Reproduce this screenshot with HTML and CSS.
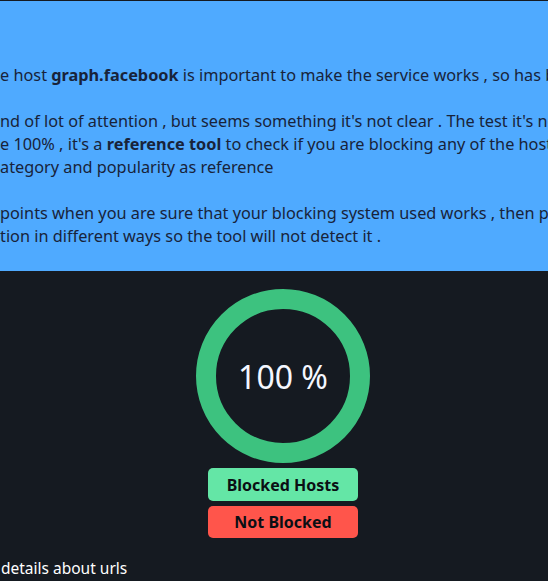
FILE: index.html
```html
<!DOCTYPE html>
<html lang="en">
<head>
  <meta charset="UTF-8">
  <title>Blocking test</title>
  <link rel="stylesheet" href="styles.css">
</head>
<body>
  <div class="intro">
    <p>e host <b>graph.facebook</b> is important to make the service works , so has been whitelisted</p>
    <p>nd of lot of attention , but seems something it's not clear . The test it's not<br>
    e 100% , it's a <b>reference tool</b> to check if you are blocking any of the hosts<br>
    ategory and popularity as reference</p>
    <p>points when you are sure that your blocking system used works , then probably<br>
    tion in different ways so the tool will not detect it .</p>
  </div>

  <div class="result">
    <div class="score">
      <div class="ring">100 %</div>
      <button class="tag blocked">Blocked Hosts</button>
      <button class="tag not-blocked">Not Blocked</button>
    </div>
    <p class="details">details about urls</p>
  </div>
</body>
</html>
```

FILE: styles.css
```css
html, body {
  margin: 0;
  overflow: hidden;
}
body {
  font-family: 'Noto Sans', sans-serif;
  font-size: 16px;
  line-height: 23px;
  background-color: #151a21;
  border-top: 1px solid #151a21;
}
.intro {
  background-color: #4faaff;
  color: #18233a;
  font-size: 16.3px;
  padding: 63px 0 23px 0;
  white-space: nowrap;
}
.intro p {
  margin: 0 0 23px 0;
}
.intro p:last-child {
  margin-bottom: 0;
}
.result {
  color: white;
}
.score {
  width: 566px;
  display: flex;
  flex-direction: column;
  align-items: center;
  padding-top: 18px;
}
.ring {
  width: 174px;
  height: 174px;
  box-sizing: border-box;
  border: 20px solid #3dc27f;
  border-radius: 50%;
  display: flex;
  align-items: center;
  justify-content: center;
  font-size: 32px;
  color: #f4f7ff;
}
.tag {
  width: 150px;
  height: 33px;
  margin-top: 5px;
  border: none;
  border-radius: 5px;
  font-family: 'Noto Sans', sans-serif;
  font-size: 16px;
  font-weight: bold;
  color: #0b0f14;
}
.blocked { background-color: #64e6a6; }
.not-blocked { background-color: #ff554b; height: 32px; }
.details {
  margin: 19px 0 0 1px;
  font-size: 15.5px;
}
```
